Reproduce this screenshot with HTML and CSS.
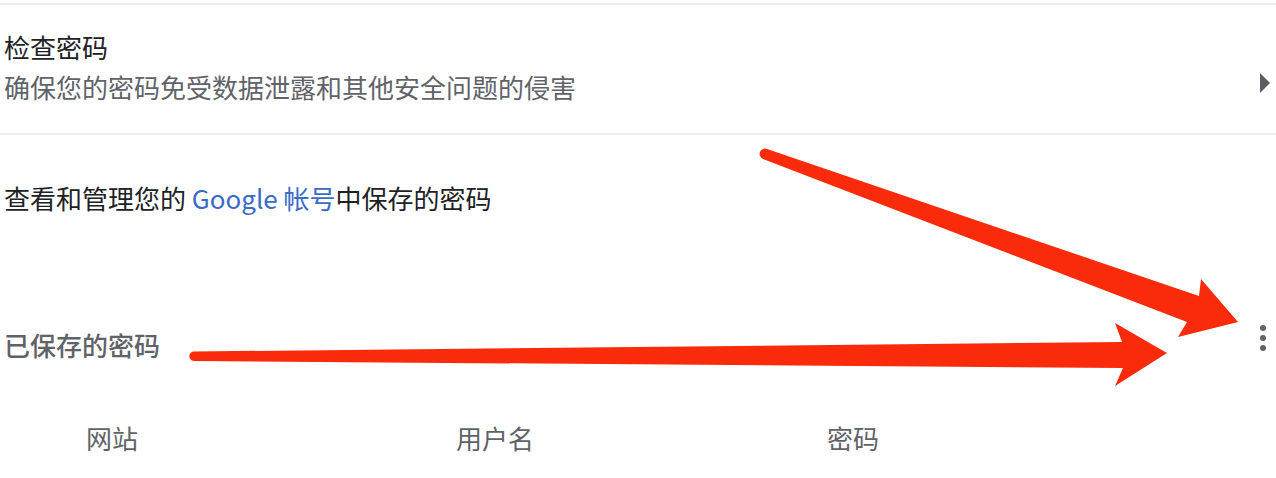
FILE: index.html
```html
<!DOCTYPE html>
<html lang="zh-CN">
<head>
<meta charset="utf-8">
<title>密码</title>
<link rel="stylesheet" href="styles.css">
</head>
<body>
<main class="settings">
  <div class="rule"></div>

  <div class="row row-check">
    <div class="row-text">
      <div class="row-title">检查密码</div>
      <div class="row-sub">确保您的密码免受数据泄露和其他安全问题的侵害</div>
    </div>
    <svg class="subpage-arrow" viewBox="0 0 10 20" aria-hidden="true">
      <path d="M0 0 L10 10 L0 20 Z"/>
    </svg>
  </div>

  <p class="account-note">查看和管理您的 <a class="link" href="#">Google 帐号</a>中保存的密码</p>

  <div class="saved-header">
    <h2 class="saved-title">已保存的密码</h2>
    <button class="menu" type="button" aria-label="更多操作">
      <svg viewBox="0 0 6 26" aria-hidden="true">
        <circle cx="3" cy="3" r="3"/>
        <circle cx="3" cy="13" r="3"/>
        <circle cx="3" cy="23" r="3"/>
      </svg>
    </button>
  </div>

  <div class="cols">
    <span>网站</span>
    <span>用户名</span>
    <span>密码</span>
  </div>

  <!-- callout arrows drawn over the list -->
  <svg class="callouts" viewBox="0 0 1276 478" aria-hidden="true">
    <path d="M767 149 L1199 296 L1201 279 L1238 322 L1178 337 L1187 322 L763 159 A5 5 0 0 1 767 149 Z"/>
    <path d="M194 351.5 L1122 342 L1115 323 L1167 353 L1115 386 L1123 368 L194 361 A4.75 4.75 0 0 1 194 351.5 Z"/>
  </svg>
</main>
</body>
</html>
```

FILE: styles.css
```css
html, body {
  margin: 0;
  padding: 0;
  background: #ffffff;
}

.settings {
  position: relative;
  width: 1276px;
  height: 478px;
  overflow: hidden;
  font-family: "Noto Sans CJK SC", "Noto Sans", sans-serif;
  font-size: 26px;
  color: #202124;
}

.rule {
  height: 2px;
  margin-top: 3px;
  background: #ececec;
}

.row-check {
  display: flex;
  justify-content: space-between;
  padding: 22px 6px 26px 4px;
  border-bottom: 2px solid #ececec;
}

.row-title {
  line-height: 40px;
  color: #202124;
}

.row-sub {
  line-height: 40px;
  color: #5f6368;
}

.subpage-arrow {
  align-self: center;
  margin-top: 32px;
  width: 10px;
  height: 20px;
  fill: #5a5d61;
}

.account-note {
  margin: 0;
  padding: 43px 0 0 4px;
  line-height: 40px;
  color: #202124;
}

.link {
  color: #3a6bc6;
  text-decoration: none;
}

.saved-header {
  display: flex;
  align-items: center;
  justify-content: space-between;
  height: 40px;
  margin-top: 107px;
  padding: 0 10px 0 4px;
}

.saved-title {
  margin: 0;
  font-size: 26px;
  font-weight: 500;
  line-height: 40px;
  color: #5f6368;
}

.menu {
  display: flex;
  margin: 0 0 14px 0;
  padding: 0;
  border: 0;
  background: none;
}

.menu svg {
  width: 6px;
  height: 26px;
  fill: #5f6368;
}

.cols {
  display: grid;
  grid-template-columns: 370px 371px 1fr;
  margin-top: 53px;
  padding-left: 86px;
  line-height: 40px;
  color: #5f6368;
}

.callouts {
  position: absolute;
  left: 0;
  top: 0;
  width: 1276px;
  height: 478px;
  pointer-events: none;
  fill: #fa2b0a;
}
```
